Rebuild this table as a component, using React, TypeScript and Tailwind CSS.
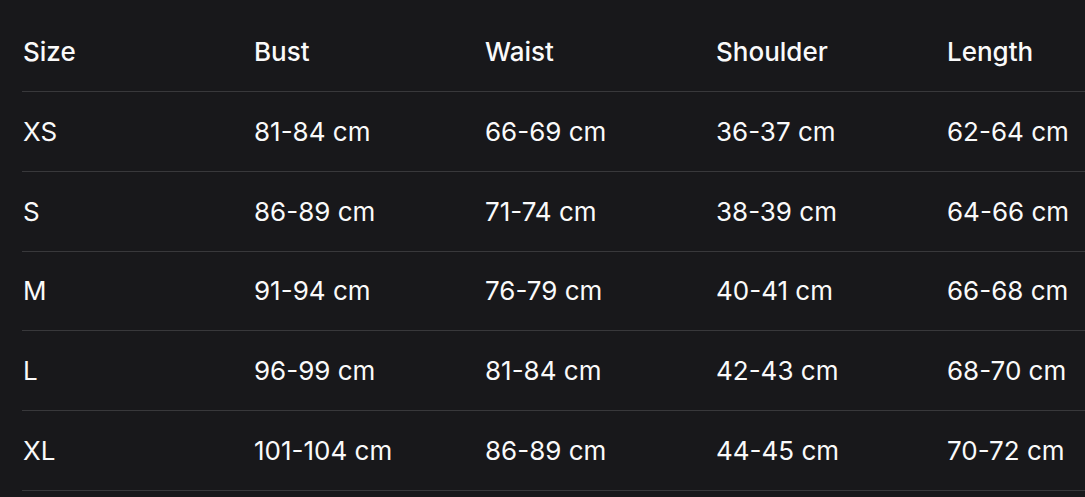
import React from "react";

const headers = ["Size", "Bust", "Waist", "Shoulder", "Length"];
const rows = [
  ["XS", "81-84 cm", "66-69 cm", "36-37 cm", "62-64 cm"],
  ["S", "86-89 cm", "71-74 cm", "38-39 cm", "64-66 cm"],
  ["M", "91-94 cm", "76-79 cm", "40-41 cm", "66-68 cm"],
  ["L", "96-99 cm", "81-84 cm", "42-43 cm", "68-70 cm"],
  ["XL", "101-104 cm", "86-89 cm", "44-45 cm", "70-72 cm"],
];

export default function App() {
  return (
    <div
      className="w-[1085px] h-[497px] overflow-hidden bg-[#18181b] pt-[12px] pl-[22px] text-[#fafafa]"
      style={{ fontFamily: "Inter, 'Noto Sans', sans-serif" }}
    >
      <div className="w-[1155px]">
        <div className="grid grid-cols-[repeat(5,231px)] h-[80px] items-center border-b border-[#38383b] text-[26px] font-medium">
          {headers.map((h) => (
            <div key={h} className="pl-px -mt-px">{h}</div>
          ))}
        </div>
        {rows.map((r) => (
          <div
            key={r[0]}
            className="grid grid-cols-[repeat(5,231px)] h-[79.8px] items-center border-b border-[#38383b] text-[26px] font-normal"
          >
            {r.map((c, i) => (
              <div key={i} className="pl-px">{c}</div>
            ))}
          </div>
        ))}
      </div>
    </div>
  );
}
